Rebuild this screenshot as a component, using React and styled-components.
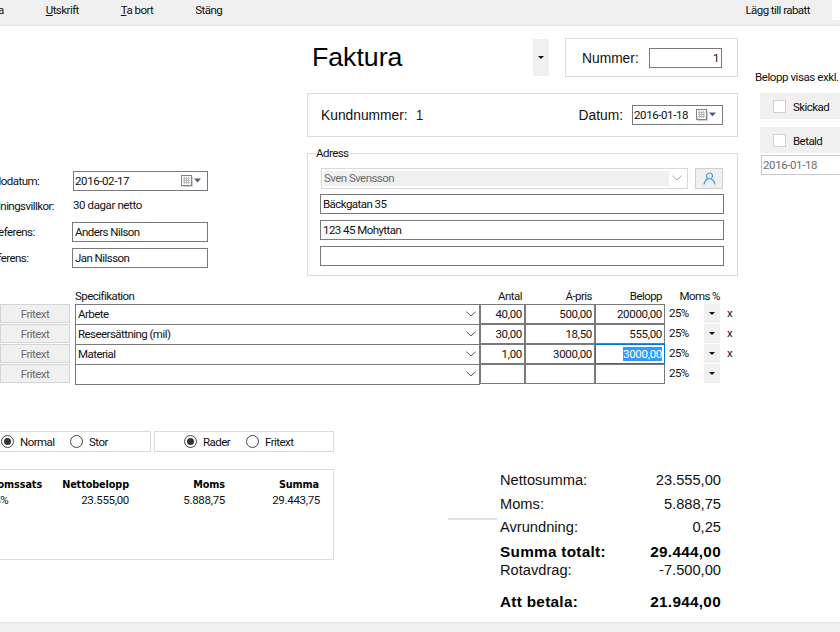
import React from 'react';
import styled, { createGlobalStyle } from 'styled-components';

const GlobalStyle = createGlobalStyle`
    html, body {
        margin: 0;
        padding: 0;
        background: #fff;
        overflow: hidden;
    }
    * {
        box-sizing: border-box;
    }
`;

const uiFont = `
    font-family: Roboto, "Liberation Sans", sans-serif;
    font-size: 11.5px;
    letter-spacing: -0.55px;
    color: #111;
`;

const Window = styled.div`
    width: 840px;
    height: 632px;
    overflow: hidden;
    display: flex;
    flex-direction: column;
    ${uiFont};
`;

const Toolbar = styled.div`
    flex: none;
    height: 26px;
    display: flex;
    align-items: flex-start;
    gap: 42px;
    background: #f0f0f0;
    border-bottom: 1px solid #e4e4e4;
`;

const ToolItem = styled.div`
    line-height: 20px;
    &:first-child {
        margin-left: -23px;
    }
    u {
        text-underline-offset: 1px;
    }
`;

const ToolRight = styled(ToolItem)`
    margin-left: auto;
`;

const ToolGap = styled.div`
    width: 8px;
    height: 20px;
    margin-left: -20px;
    background: #fff;
`;

const Sheet = styled.div`
    flex: 1;
    width: 900px;
    margin-left: -50px;
    display: flex;
    flex-direction: column;
`;

const TopSection = styled.div`
    display: flex;
    height: 250px;
`;

const LeftForm = styled.div`
    width: 357px;
    flex: none;
    padding: 145px 0 0 22px;
    display: grid;
    grid-template-columns: 100px 136px;
    grid-template-rows: 20px 19px 20px 20px;
    row-gap: 6px;
    align-items: center;
`;

const FormLabel = styled.div`
    line-height: 19px;
    padding-left: ${props => props.$shift || 0}px;
    white-space: nowrap;
`;

const FormValue = styled.div`
    height: 19px;
    line-height: 17px;
    margin-left: 1px;
    letter-spacing: -0.4px;
`;

const Field = styled.div`
    height: 20px;
    display: flex;
    align-items: center;
    padding: 0 ${props => props.$pad || 2}px;
    background: #fff;
    border: 1px solid #7a7a7a;
    justify-content: ${props => props.$end ? 'flex-end' : 'flex-start'};
    width: ${props => props.$width ? `${props.$width}px` : 'auto'};
    white-space: nowrap;
`;

const DateField = styled(Field)`
    justify-content: space-between;
    padding: 0 6px 0 ${props => props.$pad || 1}px;
    margin-left: ${props => props.$inset || 0}px;
    letter-spacing: -0.4px;
`;

const CenterColumn = styled.div`
    width: 431px;
    flex: none;
    padding-top: 12px;
    display: flex;
    flex-direction: column;
`;

const HeadRow = styled.div`
    display: flex;
    align-items: center;
    height: 39px;
`;

const Title = styled.h1`
    margin: 0 auto 0 5px;
    font-family: "Liberation Sans", Arial, sans-serif;
    font-size: 26.67px;
    font-weight: 400;
    letter-spacing: 0;
    color: #000;
`;

const ArrowButton = styled.div`
    width: 16px;
    height: ${props => props.$height || 19}px;
    background: #f0f0f0;
    display: flex;
    align-items: center;
    justify-content: center;
    flex: none;
`;

const Arrow = styled.span`
    width: 0;
    height: 0;
    border-left: 3px solid transparent;
    border-right: 3px solid transparent;
    border-top: 3px solid #111;
`;

const Panel = styled.div`
    border: 1px solid #dcdcdc;
    display: flex;
    align-items: center;
`;

const NumberPanel = styled(Panel)`
    width: 173px;
    height: 39px;
    margin-left: 16px;
    padding: 0 15px 0 16px;
    justify-content: space-between;
`;

const KundPanel = styled(Panel)`
    height: 44px;
    margin-top: 16px;
    padding: 0 14px 0 13px;
`;

const BigLabel = styled.span`
    font-family: "Liberation Sans", Arial, sans-serif;
    font-size: 13.8px;
    letter-spacing: 0;
    color: #111;
    margin-right: ${props => props.$gap || 0}px;
    padding-top: 1px;
`;

const KundValue = styled(BigLabel)`
    margin-right: auto;
    color: #3a1030;
`;

const AdressGroup = styled.fieldset`
    margin: 10px 0 0;
    height: 130px;
    padding: 8px 12px 0;
    border: 1px solid #dcdcdc;
    display: flex;
    flex-direction: column;
    min-width: 0;
`;

const Legend = styled.legend`
    margin-left: -4px;
    padding: 0 2px 0 0;
    line-height: 13px;
`;

const ComboRow = styled.div`
    display: flex;
    justify-content: space-between;
    margin-bottom: 5px;
`;

const DisabledCombo = styled.div`
    width: 367px;
    height: 21px;
    margin-left: 1px;
    padding: 2px 5px 2px 2px;
    border: 1px solid #d9d9d9;
    display: flex;
    align-items: center;
    justify-content: space-between;
`;

const DisabledText = styled.div`
    width: 345px;
    height: 15px;
    line-height: 15px;
    background: #f0f0f0;
    color: #6d6d6d;
`;

const PersonButton = styled.div`
    width: 28px;
    height: 21px;
    margin-right: 2px;
    background: #f0f0f0;
    border: 1px solid #d0d0d0;
    display: flex;
    align-items: center;
    justify-content: center;
`;

const AddressField = styled(Field)`
    margin: 0 0 6px;
    width: 404px;
`;

const RightColumn = styled.div`
    padding: 44px 0 0 17px;
    flex: none;
    width: 112px;
`;

const Note = styled.div`
    line-height: 14px;
    white-space: nowrap;
    margin-bottom: 9px;
    letter-spacing: -0.42px;
`;

const CheckPanel = styled.div`
    margin: 0 0 8px 5px;
    width: 90px;
    height: 26px;
    padding: 1px 0 0 13px;
    background: #f0f0f0;
    display: flex;
    align-items: center;
    gap: 7px;
`;

const CheckBox = styled.span`
    width: 13px;
    height: 13px;
    background: #fff;
    border: 1px solid #d2d2d2;
`;

const DisabledDate = styled.div`
    margin: -6px 0 0 6px;
    width: 90px;
    height: 20px;
    border: 1px solid #c8c8c8;
    line-height: 18px;
    padding-left: 1px;
    color: #6d6d6d;
    letter-spacing: -0.4px;
`;

const SpecTable = styled.div`
    margin-top: 13px;
    padding-left: 50px;
    display: flex;
    flex-direction: column;
`;

const SpecHead = styled.div`
    display: flex;
    height: 15px;
    line-height: 14px;
`;

const SpecRow = styled.div`
    display: flex;
    height: 20px;
`;

const FritextButton = styled.div`
    width: 70px;
    height: 19px;
    margin-right: 5px;
    flex: none;
    background: #f0f0f0;
    border: 1px solid #d4d4d4;
    color: #6d6d6d;
    text-align: center;
    line-height: 18px;
`;

const SpecCell = styled.div`
    width: 405px;
    height: 21px;
    flex: none;
    display: flex;
    align-items: center;
    justify-content: space-between;
    padding: 0 3px 1px 2px;
    border: 1px solid #7a7a7a;
`;

const NumCell = styled.div`
    width: ${props => props.$width}px;
    height: 20px;
    flex: none;
    text-align: right;
    line-height: 18px;
    padding-right: 2px;
    letter-spacing: -0.3px;
    background: #fff;
    border: 1px solid ${props => props.$active ? '#0078d7' : '#7a7a7a'};
`;

const Selected = styled.span`
    background: #3399ff;
    color: #fff;
`;

const VatText = styled.div`
    width: 35px;
    margin-left: 4px;
    line-height: 18px;
    flex: none;
`;

const RemoveMark = styled.div`
    margin-left: 7px;
    line-height: 19px;
`;

const HeadCell = styled.div`
    width: ${props => props.$width}px;
    padding-left: ${props => props.$left || 0}px;
    text-align: ${props => props.$align || 'right'};
    flex: none;
    white-space: nowrap;
`;

const BottomSection = styled.div`
    display: flex;
    align-items: flex-start;
`;

const BottomLeft = styled.div`
    width: 384px;
    flex: none;
    padding-top: 47px;
`;

const RadioRow = styled.div`
    display: flex;
    gap: 3px;
    height: 21px;
`;

const RadioPanel = styled(Panel)`
    width: ${props => props.$width}px;
    padding-left: ${props => props.$left}px;
    height: 21px;
`;

const RadioCircle = styled.span`
    width: 13px;
    height: 13px;
    border-radius: 50%;
    border: 1px solid #444;
    background: #fff;
    flex: none;
    display: flex;
    align-items: center;
    justify-content: center;
    margin-right: 6px;
    &::after {
        content: '';
        display: ${props => props.$on ? 'block' : 'none'};
        width: 7px;
        height: 7px;
        border-radius: 50%;
        background: #333;
    }
`;

const RadioLabel = styled.span`
    width: ${props => props.$width}px;
`;

const SummaryBox = styled.div`
    margin-top: 17px;
    height: 91px;
    border: 1px solid #dcdcdc;
    padding: 7px 0 0 37px;
    display: grid;
    grid-template-columns: 50px 91px 96px 95px;
    grid-auto-rows: 15px;
    align-items: center;
    letter-spacing: -0.3px;
`;

const SummaryHead = styled.div`
    font-family: "DejaVu Sans", Verdana, sans-serif;
    font-size: 9.7px;
    font-weight: 700;
    letter-spacing: -0.1px;
    color: #000;
    text-align: ${props => props.$left ? 'left' : 'right'};
    padding-right: ${props => props.$right || 0}px;
    white-space: nowrap;
`;

const SummaryValue = styled.div`
    text-align: ${props => props.$left ? 'left' : 'right'};
`;

const Rule = styled.div`
    width: 49px;
    height: 2px;
    margin: 134px 0 0 114px;
    background: #e3e3e8;
    flex: none;
`;

const Totals = styled.div`
    width: 221px;
    margin: 87px 0 0 3px;
    font-family: "Liberation Sans", Arial, sans-serif;
    font-size: 14.67px;
    letter-spacing: 0;
    color: #111;
`;

const TotalRow = styled.div`
    display: flex;
    justify-content: space-between;
    height: ${props => props.$height}px;
    line-height: 18px;
    font-weight: ${props => props.$bold ? 700 : 400};
    font-size: ${props => props.$bold ? '15.3px' : '14.67px'};
    letter-spacing: ${props => props.$bold ? '0.3px' : '0'};
    color: ${props => props.$bold ? '#000' : '#111'};
`;

const Footer = styled.div`
    flex: none;
    height: 10px;
    background: #f0f0f0;
    border-top: 1px solid #e4e4e4;
`;

const CalendarIcon = () => (
    <svg width="20" height="12" viewBox="0 0 20 12">
        <rect x="0.5" y="0.5" width="10" height="10" fill="#f6f6f6" stroke="#858585" />
        <path d="M2 3.5h7M2 5.5h7M2 7.5h7M3.5 2v7M5.5 2v7M7.5 2v7" stroke="#b4b4b4" strokeWidth="0.8" />
        <path d="M11.5 1.5v10H1.5" fill="none" stroke="#cfcfcf" />
        <path d="M13 3.5h7l-3.5 4z" fill="#4d6185" />
    </svg>
);

const Chevron = ({ color = '#555' }) => (
    <svg width="10" height="6" viewBox="0 0 10 6">
        <path d="M0.5 0.8 5 5 9.5 0.8" fill="none" stroke={color} strokeWidth="1" />
    </svg>
);

const PersonIcon = () => (
    <svg width="13" height="13" viewBox="0 0 13 13">
        <circle cx="6.5" cy="4" r="3" fill="none" stroke="#4a9fe0" strokeWidth="1.2" />
        <path d="M1 12.5C1.4 9.5 3 7.8 4.8 7M12 12.5C11.6 9.5 10 7.8 8.2 7" fill="none" stroke="#4a9fe0" strokeWidth="1.2" />
    </svg>
);

const rows = [
    { spec: 'Arbete', antal: '40,00', pris: '500,00', belopp: '20000,00', remove: true },
    { spec: 'Reseersättning (mil)', antal: '30,00', pris: '18,50', belopp: '555,00', remove: true },
    { spec: 'Material', antal: '1,00', pris: '3000,00', belopp: '3000,00', remove: true, active: true },
    { spec: '', antal: '', pris: '', belopp: '', remove: false },
];

const totals = [
    { label: 'Nettosumma:', value: '23.555,00', height: 24 },
    { label: 'Moms:', value: '5.888,75', height: 23 },
    { label: 'Avrundning:', value: '0,25', height: 25 },
    { label: 'Summa totalt:', value: '29.444,00', height: 18, bold: true },
    { label: 'Rotavdrag:', value: '-7.500,00', height: 32 },
    { label: 'Att betala:', value: '21.944,00', height: 18, bold: true },
];

export default function App() {
    return (
        <Window>
            <GlobalStyle />
            <Toolbar>
                <ToolItem>Spara</ToolItem>
                <ToolItem><u>U</u>tskrift</ToolItem>
                <ToolItem><u>T</u>a bort</ToolItem>
                <ToolItem>Stäng</ToolItem>
                <ToolRight>Lägg till rabatt</ToolRight>
                <ToolGap />
            </Toolbar>
            <Sheet>
                <TopSection>
                    <LeftForm>
                        <FormLabel>Förfallodatum:</FormLabel>
                        <DateField $inset={1}>2016-02-17 <CalendarIcon /></DateField>
                        <FormLabel $shift={5}>Betalningsvillkor:</FormLabel>
                        <FormValue>30 dagar netto</FormValue>
                        <FormLabel $shift={5}>Vår referens:</FormLabel>
                        <Field>Anders Nilson</Field>
                        <FormLabel $shift={5}>Er referens:</FormLabel>
                        <Field>Jan Nilsson</Field>
                    </LeftForm>
                    <CenterColumn>
                        <HeadRow>
                            <Title>Faktura</Title>
                            <ArrowButton $height={37}><Arrow /></ArrowButton>
                            <NumberPanel>
                                <BigLabel>Nummer:</BigLabel>
                                <Field $end $width={73}>1</Field>
                            </NumberPanel>
                        </HeadRow>
                        <KundPanel>
                            <BigLabel $gap={8}>Kundnummer:</BigLabel>
                            <KundValue>1</KundValue>
                            <BigLabel $gap={9}>Datum:</BigLabel>
                            <DateField $width={91}>2016-01-18 <CalendarIcon /></DateField>
                        </KundPanel>
                        <AdressGroup>
                            <Legend>Adress</Legend>
                            <ComboRow>
                                <DisabledCombo>
                                    <DisabledText>Sven Svensson</DisabledText>
                                    <Chevron color="#aaa" />
                                </DisabledCombo>
                                <PersonButton><PersonIcon /></PersonButton>
                            </ComboRow>
                            <AddressField>Bäckgatan 35</AddressField>
                            <AddressField>123 45 Mohyttan</AddressField>
                            <AddressField />
                        </AdressGroup>
                    </CenterColumn>
                    <RightColumn>
                        <Note>Belopp visas exkl. moms</Note>
                        <CheckPanel><CheckBox />Skickad</CheckPanel>
                        <CheckPanel><CheckBox />Betald</CheckPanel>
                        <DisabledDate>2016-01-18</DisabledDate>
                    </RightColumn>
                </TopSection>
                <SpecTable>
                    <SpecHead>
                        <HeadCell $width={480} $left={75} $align="left">Specifikation</HeadCell>
                        <HeadCell $width={42}>Antal</HeadCell>
                        <HeadCell $width={70}>Á-pris</HeadCell>
                        <HeadCell $width={70}>Belopp</HeadCell>
                        <HeadCell $width={58}>Moms %</HeadCell>
                    </SpecHead>
                    {rows.map(row => (
                        <SpecRow key={row.spec || 'empty'}>
                            <FritextButton>Fritext</FritextButton>
                            <SpecCell>
                                {row.spec}
                                <span />
                                <Chevron />
                            </SpecCell>
                            <NumCell $width={45}>{row.antal}</NumCell>
                            <NumCell $width={70}>{row.pris}</NumCell>
                            <NumCell $width={70} $active={row.active}>
                                {row.active ? <Selected>{row.belopp}</Selected> : row.belopp}
                            </NumCell>
                            <VatText>25%</VatText>
                            <ArrowButton><Arrow /></ArrowButton>
                            {row.remove && <RemoveMark>x</RemoveMark>}
                        </SpecRow>
                    ))}
                </SpecTable>
                <BottomSection>
                    <BottomLeft>
                        <RadioRow>
                            <RadioPanel $width={201} $left={50}>
                                <RadioCircle $on /><RadioLabel $width={50}>Normal</RadioLabel>
                                <RadioCircle /><RadioLabel>Stor</RadioLabel>
                            </RadioPanel>
                            <RadioPanel $width={180} $left={29}>
                                <RadioCircle $on /><RadioLabel $width={43}>Rader</RadioLabel>
                                <RadioCircle /><RadioLabel>Fritext</RadioLabel>
                            </RadioPanel>
                        </RadioRow>
                        <SummaryBox>
                            <SummaryHead $left>Momssats</SummaryHead>
                            <SummaryHead>Nettobelopp</SummaryHead>
                            <SummaryHead>Moms</SummaryHead>
                            <SummaryHead $right={1}>Summa</SummaryHead>
                            <SummaryValue $left>25%</SummaryValue>
                            <SummaryValue>23.555,00</SummaryValue>
                            <SummaryValue>5.888,75</SummaryValue>
                            <SummaryValue>29.443,75</SummaryValue>
                        </SummaryBox>
                    </BottomLeft>
                    <Rule />
                    <Totals>
                        {totals.map(total => (
                            <TotalRow key={total.label} $height={total.height} $bold={total.bold}>
                                <span>{total.label}</span>
                                <span>{total.value}</span>
                            </TotalRow>
                        ))}
                    </Totals>
                </BottomSection>
            </Sheet>
            <Footer />
        </Window>
    );
}
